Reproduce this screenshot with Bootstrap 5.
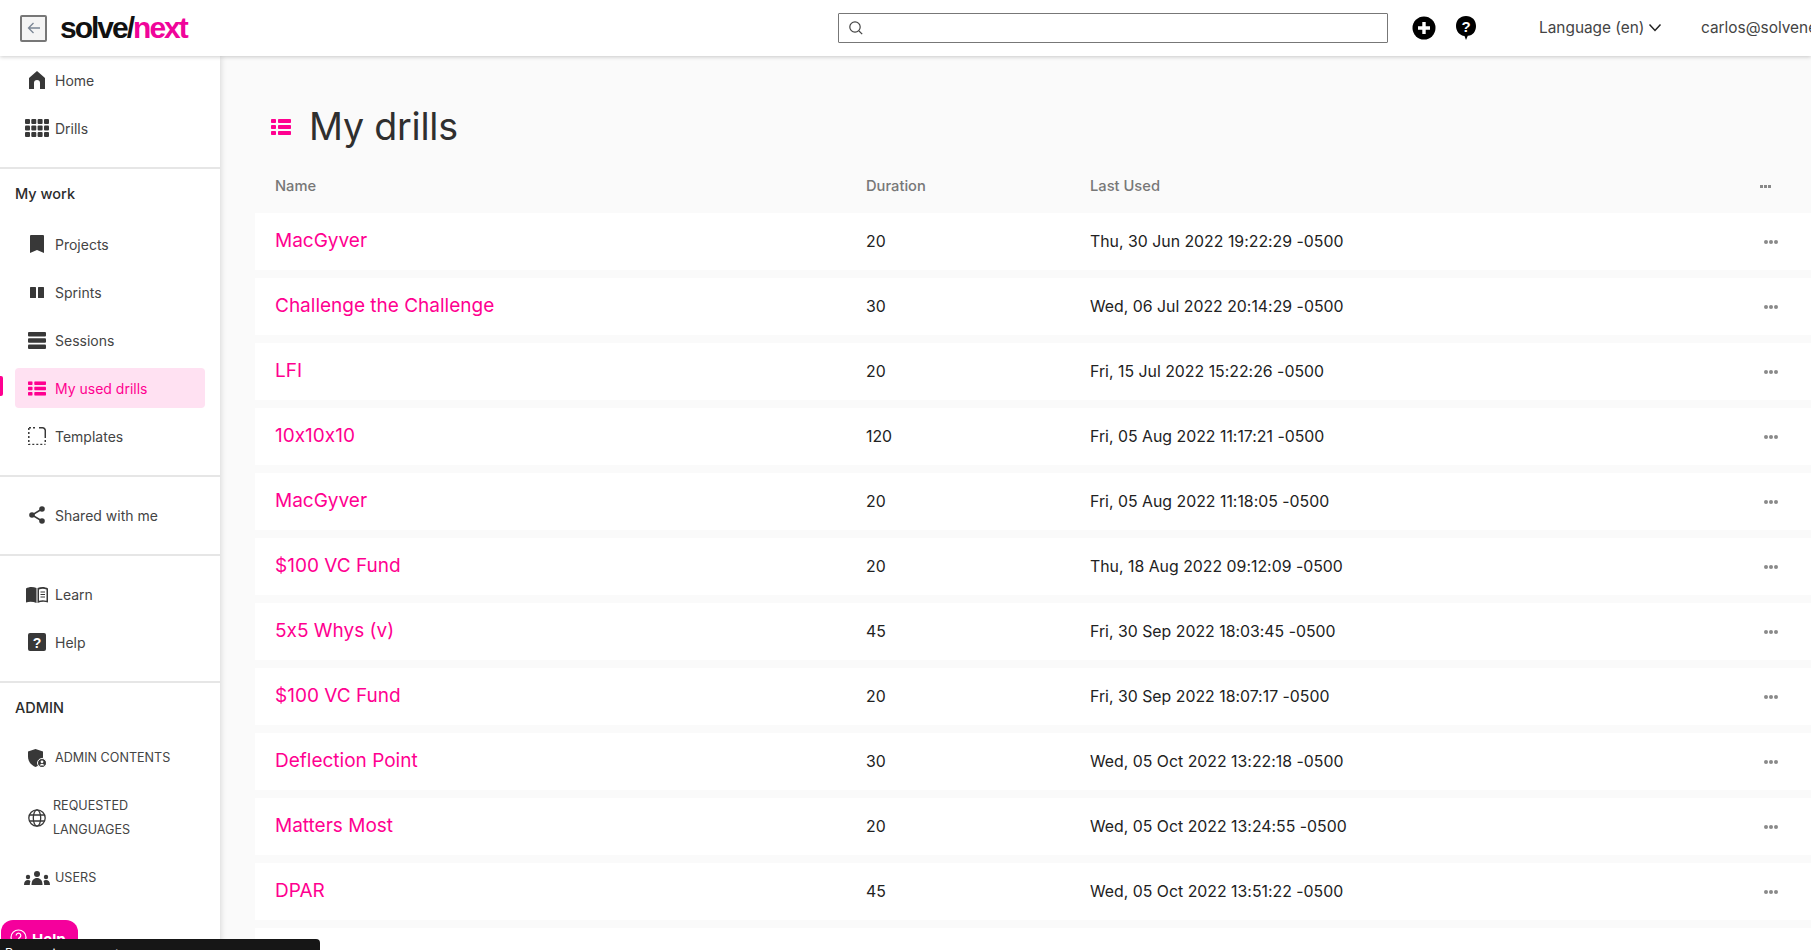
<!DOCTYPE html>
<html lang="en"><head><meta charset="utf-8">
<title>My drills</title>
<link href="https://cdn.jsdelivr.net/npm/bootstrap@5.3.0/dist/css/bootstrap.min.css" rel="stylesheet">
<style>
:root{--pink:#ff0090;}
html,body{height:100%;}
body{font-family:Inter,"Noto Sans",sans-serif;font-feature-settings:"calt" 0;background:#fafafa;color:#333;overflow:hidden;width:1811px;height:950px;}
.sn-top{height:56px;background:#fff;box-shadow:0 1px 4px rgba(0,0,0,.2);position:relative;z-index:3;white-space:nowrap;overflow:hidden;}
.sn-back{width:27px;height:27px;margin-left:20px;border:2px solid #777;border-radius:2px;background:#f4f4f4;padding:0;}
.sn-logo{font-family:"Liberation Sans",sans-serif;font-weight:700;font-size:30px;letter-spacing:-2px;color:#111;margin-left:13px;width:778px;line-height:1;}
.sn-logo span{color:#f0049a;}
.sn-search{width:550px;height:30px;border:1px solid #777;border-radius:1px;padding-left:9px;background:#fff;}
.sn-tools{margin-left:24px;gap:19px;width:127px;flex:none;}
.sn-lang{font-size:15.400px;color:#444;width:162px;flex:none;}
.sn-user{font-size:15.400px;color:#444;flex:none;}
.sn-body{height:894px;}
.sn-side{width:220px;flex:none;background:#fff;box-shadow:1px 0 6px rgba(0,0,0,.14);position:relative;z-index:2;color:#444;font-size:14px;overflow:hidden;}
.sn-group{border-bottom:2px solid #e6e6e6;padding-bottom:15px;}
.sn-group.sn-last{border-bottom:0;}
.sn-group.sn-gap{padding-top:14px;}
.sn-head{font-size:14.500px;font-weight:500;color:#2c2c2c;padding-left:15px;height:24px;line-height:24px;margin-top:13px;margin-bottom:14px;}
.sn-item{height:48px;padding:4px 15px;}
.sn-item.sn-tall{height:72px;padding:16px 15px;}
.sn-link{height:40px;border-radius:4px;color:#444;text-decoration:none;position:relative;}
.sn-caps{font-size:12.600px;}
.sn-ico{width:40px;flex:none;display:flex;justify-content:center;fill:#383838;padding-left:4px;}
.sn-tall .sn-txt{line-height:24px;margin-left:-2px;}
.sn-active{background:#ffe1f2;color:var(--pink);}
.sn-active .sn-ico{fill:var(--pink);}
.sn-active::before{content:"";position:absolute;left:-15px;top:8px;width:3px;height:20px;background:var(--pink);border-radius:0 2px 2px 0;}
.sn-main{flex:1;min-width:0;padding:49px 0 0 35px;overflow:hidden;}
.sn-title{margin:0 0 13px;font-size:37.600px;line-height:43px;font-weight:400;color:#2f2f2f;padding-left:16px;letter-spacing:-.2px;}
.sn-title svg{margin-right:18px;fill:var(--pink);}
.sn-cols{height:52px;padding-bottom:2px;color:#777;font-size:14.700px;font-weight:500;}
.sn-cols svg{margin-left:-4px;}
.sn-row{height:57px;margin-bottom:8px;background:#fff;font-size:15.850px;color:#222;}
.sn-c1{width:611px;padding-left:20px;flex:none;}
.sn-c2{width:224px;flex:none;}
.sn-c3{flex:1;}
.sn-c4{width:47px;flex:none;display:flex;}
.sn-row a{color:var(--pink);font-size:19px;text-decoration:none;}
.sn-help{position:fixed;left:1px;top:920px;width:77px;height:40px;background:#f5009c;border-radius:12px 12px 0 0;color:#fff;font-weight:700;font-size:15px;padding:9px 0 0 9px;z-index:4;gap:5px;}
.sn-toast{position:fixed;left:0;top:939px;width:320px;height:40px;background:#161616;color:#fff;font-size:12.500px;padding:6px 0 0 5px;border-radius:0 4px 0 0;z-index:5;}
</style></head>
<body>
<svg width="0" height="0" class="position-absolute">
<symbol id="i-list" viewBox="0 0 20 16"><rect x="0" y="0" width="5" height="4" rx=".8"/><rect x="0" y="6" width="5" height="4" rx=".8"/><rect x="0" y="12" width="5" height="4" rx=".8"/><rect x="7" y="0" width="13" height="4" rx=".8"/><rect x="7" y="6" width="13" height="4" rx=".8"/><rect x="7" y="12" width="13" height="4" rx=".8"/></symbol>
<symbol id="i-dots" viewBox="0 0 14 4"><circle cx="2" cy="2" r="2"/><circle cx="7" cy="2" r="2"/><circle cx="12" cy="2" r="2"/></symbol>
</svg>
<header class="sn-top d-flex align-items-center">
  <button class="sn-back d-flex align-items-center justify-content-center flex-shrink-0" type="button" aria-label="Back"><svg width="16" height="16" viewBox="0 0 16 16" fill="none" stroke="#7a8594" stroke-width="1.300"><path d="M14 8H2.500M7.500 3 2.500 8l5 5"/></svg></button>
  <div class="sn-logo flex-shrink-0">solve/<span>next</span></div>
  <div class="sn-search d-flex align-items-center flex-shrink-0"><svg width="16" height="16" viewBox="0 0 16 16" fill="none" stroke="#444" stroke-width="1.200"><circle cx="7" cy="7" r="5.200"/><path d="m11 11 3.200 3.200"/></svg></div>
  <div class="sn-tools d-flex align-items-center">
    <svg width="24" height="24" viewBox="0 0 24 24"><circle cx="12" cy="12" r="11.500" fill="#000"/><path d="M12 6v12M6 12h12" stroke="#fff" stroke-width="3.400"/></svg>
    <svg width="22" height="26" viewBox="0 0 22 26"><path d="M11 1C5 1 1 5.300 1 11c0 5.500 4 9.500 8.500 10l1.500 4 1.800-4.200C17.500 21 21 16.500 21 11 21 5.300 17 1 11 1z" fill="#000"/><text x="11" y="16.500" text-anchor="middle" font-size="15" font-weight="800" fill="#fff" font-family="Liberation Sans">?</text></svg>
  </div>
  <div class="sn-lang d-flex align-items-center gap-1">Language (en)<svg width="14" height="10" viewBox="0 0 14 10" fill="none" stroke="#222" stroke-width="1.500"><path d="m1.500 1.500 5.500 6 5.500-6"/></svg></div>
  <div class="sn-user">carlos@solvenext.com</div>
</header>
<div class="sn-body d-flex">
<nav class="sn-side">
  <div class="sn-group">
    <div class="sn-item"><a href="#" class="sn-link d-flex align-items-center"><span class="sn-ico"><svg width="16" height="18" viewBox="0 0 16 18"><path d="M8 0 16 7v11h-5v-6a3 3 0 0 0-6 0v6H0V7z"/></svg></span>Home</a></div>
    <div class="sn-item"><a href="#" class="sn-link d-flex align-items-center"><span class="sn-ico"><svg width="24" height="18" viewBox="0 0 24 18"><g id="gr"><rect width="5" height="5" rx="1"/><rect x="6.300" width="5" height="5" rx="1"/><rect x="12.600" width="5" height="5" rx="1"/><rect x="19" width="5" height="5" rx="1"/></g><use href="#gr" y="6.500"/><use href="#gr" y="13"/></svg></span>Drills</a></div>
  </div>
  <div class="sn-group">
    <div class="sn-head">My work</div>
    <div class="sn-item"><a href="#" class="sn-link d-flex align-items-center"><span class="sn-ico"><svg width="14" height="18" viewBox="0 0 14 18"><path d="M1 0h12a1 1 0 0 1 1 1v17l-7-3-7 3V1a1 1 0 0 1 1-1z"/></svg></span>Projects</a></div>
    <div class="sn-item"><a href="#" class="sn-link d-flex align-items-center"><span class="sn-ico"><svg width="14" height="11" viewBox="0 0 14 11"><rect width="6" height="11" rx=".5"/><rect x="8" width="6" height="11" rx=".5"/></svg></span>Sprints</a></div>
    <div class="sn-item"><a href="#" class="sn-link d-flex align-items-center"><span class="sn-ico"><svg width="18" height="17" viewBox="0 0 18 17"><rect width="18" height="4.500" rx="1"/><rect y="6.200" width="18" height="4.500" rx="1"/><rect y="12.400" width="18" height="4.500" rx="1"/></svg></span>Sessions</a></div>
    <div class="sn-item"><a href="#" class="sn-link sn-active d-flex align-items-center"><span class="sn-ico"><svg width="18" height="15" viewBox="0 0 20 16"><use href="#i-list"/></svg></span>My used drills</a></div>
    <div class="sn-item"><a href="#" class="sn-link d-flex align-items-center"><span class="sn-ico"><svg width="18" height="18" viewBox="0 0 18 18" fill="none" stroke="#383838" stroke-width="1.500"><path d="M11 .8h3.500a2.800 2.800 0 0 1 2.800 2.800V11" /><path d="M.8 1v16.500H17.500" stroke-dasharray="2 2"/><path d="M1 .8h8" stroke-dasharray="2 2"/><path d="M17.300 13v4" stroke-dasharray="2 2"/></svg></span>Templates</a></div>
  </div>
  <div class="sn-group sn-gap">
    <div class="sn-item"><a href="#" class="sn-link d-flex align-items-center"><span class="sn-ico"><svg width="16" height="18" viewBox="0 0 16 18"><path d="M13 3 3 9l10 6" fill="none" stroke="#383838" stroke-width="1.500"/><circle cx="13" cy="3" r="2.800"/><circle cx="3" cy="9" r="2.800"/><circle cx="13" cy="15" r="2.800"/></svg></span>Shared with me</a></div>
  </div>
  <div class="sn-group sn-gap">
    <div class="sn-item"><a href="#" class="sn-link d-flex align-items-center"><span class="sn-ico"><svg width="22" height="17" viewBox="0 0 22 17"><path d="M0 2.500C3 .5 7 .5 10.500 2v15C7 15.500 3 15.500 0 16.500z"/><path d="M11.500 2C15 .5 19 .5 22 2.500v14c-3-1-7-1-10.500.5z"/><path d="M13 3.500c2.500-1 5-1 7.500 0v11.200c-2.500-.7-5-.7-7.500 0z" fill="#fff"/><path d="M14.500 6h4.500M14.500 8.500h4.500M14.500 11h4.500" stroke="#383838" stroke-width="1"/></svg></span>Learn</a></div>
    <div class="sn-item"><a href="#" class="sn-link d-flex align-items-center"><span class="sn-ico"><svg width="18" height="18" viewBox="0 0 18 18"><rect width="18" height="18" rx="2"/><text x="9" y="14.500" text-anchor="middle" font-size="14" font-weight="700" fill="#fff" font-family="Liberation Sans">?</text></svg></span>Help</a></div>
  </div>
  <div class="sn-group sn-last">
    <div class="sn-head">ADMIN</div>
    <div class="sn-item"><a href="#" class="sn-link sn-caps d-flex align-items-center"><span class="sn-ico"><svg width="18" height="18" viewBox="0 0 18 18"><path d="M7.500 0 15 2.500v5c0 6-4 9-7.500 10.500C4 16.500 0 13.500 0 7.500v-5z"/><circle cx="14" cy="14" r="4.500" stroke="#fff"/><circle cx="14" cy="12.800" r="1.400" fill="#fff"/><path d="M11.500 16.500c.5-2 4.500-2 5 0z" fill="#fff"/></svg></span>ADMIN CONTENTS</a></div>
    <div class="sn-item sn-tall"><a href="#" class="sn-link sn-caps d-flex align-items-center"><span class="sn-ico"><svg width="18" height="18" viewBox="0 0 18 18" fill="none" stroke="#383838" stroke-width="1.300"><circle cx="9" cy="9" r="8.200"/><ellipse cx="9" cy="9" rx="3.700" ry="8.200"/><path d="M1.500 6h15M1.500 12h15"/></svg></span><span class="sn-txt">REQUESTED<br>LANGUAGES</span></a></div>
    <div class="sn-item"><a href="#" class="sn-link sn-caps d-flex align-items-center"><span class="sn-ico"><svg width="26" height="14" viewBox="0 0 26 14"><circle cx="13" cy="3" r="3"/><path d="M7.500 14c0-5 2.500-7 5.500-7s5.500 2 5.500 7z"/><circle cx="4" cy="6" r="2.200"/><path d="M0 14c0-3.500 1.500-5 4-5 1 0 1.800.3 2.500 1-.4 1-.7 2.500-.7 4z"/><circle cx="22" cy="6" r="2.200"/><path d="M26 14c0-3.500-1.500-5-4-5-1 0-1.800.3-2.500 1 .4 1 .7 2.500.7 4z"/></svg></span>USERS</a></div>
  </div>
</nav>
<main class="sn-main">
  <h1 class="sn-title d-flex align-items-center"><svg width="20" height="16"><use href="#i-list"/></svg>My drills</h1>
  <div class="sn-cols d-flex align-items-center">
    <div class="sn-c1">Name</div><div class="sn-c2">Duration</div><div class="sn-c3">Last Used</div>
    <div class="sn-c4"><svg width="11" height="3" viewBox="0 0 11 3" fill="#888"><rect width="3" height="3"/><rect x="4" width="3" height="3"/><rect x="8" width="3" height="3"/></svg></div>
  </div>
  <div id="rows"></div>
</main>
</div>
<div class="sn-help d-flex align-items-start"><svg width="17" height="17" viewBox="0 0 17 17" fill="none" stroke="#fff" stroke-width="1.200"><circle cx="8.500" cy="8.500" r="7.500"/><path d="M6.200 6.500a2.300 2.300 0 1 1 3.500 2c-.8.500-1.200 1-1.200 2M8.500 12v1.200"/></svg>Help</div>
<div class="sn-toast">Processing request</div>
<script>
const data=[["MacGyver",20,"Thu, 30 Jun 2022 19:22:29 -0500"],["Challenge the Challenge",30,"Wed, 06 Jul 2022 20:14:29 -0500"],["LFI",20,"Fri, 15 Jul 2022 15:22:26 -0500"],["10x10x10",120,"Fri, 05 Aug 2022 11:17:21 -0500"],["MacGyver",20,"Fri, 05 Aug 2022 11:18:05 -0500"],["$100 VC Fund",20,"Thu, 18 Aug 2022 09:12:09 -0500"],["5x5 Whys (v)",45,"Fri, 30 Sep 2022 18:03:45 -0500"],["$100 VC Fund",20,"Fri, 30 Sep 2022 18:07:17 -0500"],["Deflection Point",30,"Wed, 05 Oct 2022 13:22:18 -0500"],["Matters Most",20,"Wed, 05 Oct 2022 13:24:55 -0500"],["DPAR",45,"Wed, 05 Oct 2022 13:51:22 -0500"]];
document.getElementById('rows').innerHTML=data.map(d=>`<div class="sn-row d-flex align-items-center"><div class="sn-c1"><a href="#">${d[0]}</a></div><div class="sn-c2">${d[1]}</div><div class="sn-c3">${d[2]}</div><div class="sn-c4"><svg width="14" height="4" fill="#8a8a8a"><use href="#i-dots"/></svg></div></div>`).join('')+'<div class="sn-row"></div>';
</script>
<script src="https://cdn.jsdelivr.net/npm/bootstrap@5.3.0/dist/js/bootstrap.bundle.min.js"></script>
</body></html>
